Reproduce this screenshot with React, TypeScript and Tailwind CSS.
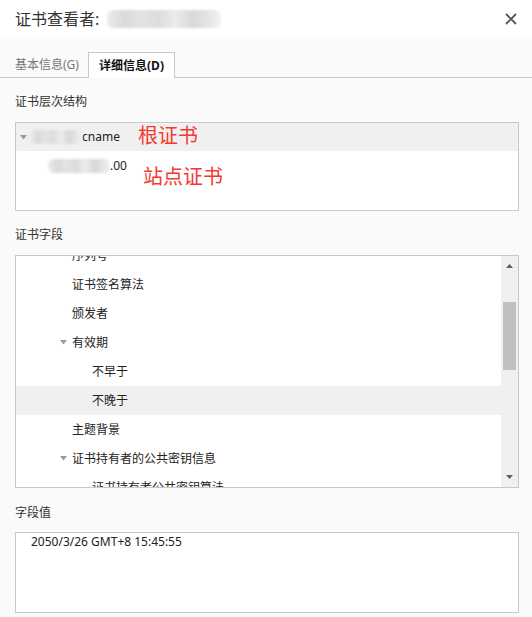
import React from "react";

type Field = {
  label: string;
  level: number;
  expanded?: boolean;
  selected?: boolean;
};

const fields: Field[] = [
  { label: "序列号", level: 1 },
  { label: "证书签名算法", level: 1 },
  { label: "颁发者", level: 1 },
  { label: "有效期", level: 1, expanded: true },
  { label: "不早于", level: 2 },
  { label: "不晚于", level: 2, selected: true },
  { label: "主题背景", level: 1 },
  { label: "证书持有者的公共密钥信息", level: 1, expanded: true },
  { label: "证书持有者公共密钥算法", level: 2 },
];

function Caret() {
  return (
    <svg width="7" height="5" viewBox="0 0 7 5" className="shrink-0">
      <path d="M0 0 L7 0 L3.5 4.5 Z" fill="#9a9a9a" />
    </svg>
  );
}

function Blur({ className }: { className: string }) {
  return (
    <div
      className={`blur-[1px] rounded-[6px] bg-[linear-gradient(90deg,#ececec_0%,#dadada_15%,#e4e4e4_30%,#dcdcdc_45%,#ececec_60%,#d8d8d8_75%,#e6e6e6_90%,#f2f2f2_100%)] ${className}`}
    />
  );
}

export default function App() {
  return (
    <div className="w-[532px] h-[617px] overflow-hidden bg-[#fafafa] text-[#222] font-['Noto_Sans','Noto_Sans_CJK_SC',sans-serif]">
      {/* title bar */}
      <div className="h-[37px] bg-white flex items-center pl-[15px] pr-[15px]">
        <span className="text-[16px] text-[#333] leading-none">证书查看者:</span>
        <Blur className="ml-[8px] w-[114px] h-[18px]" />
        <div className="flex-1" />
        <svg width="12" height="12" viewBox="0 0 12 12">
          <path d="M1 1 L11 11 M11 1 L1 11" stroke="#555" strokeWidth="1.8" />
        </svg>
      </div>

      {/* tabs */}
      <div className="h-[41px] flex items-end border-b border-[#c8c8c8] pl-[15px]">
        <div className="h-[25px] w-[73px] flex items-center text-[12px] text-[#777]">
          基本信息(G)
        </div>
        <div className="h-[26px] w-[87px] -mb-px bg-white border border-b-0 border-[#c8c8c8] flex items-center justify-center text-[12px] font-bold text-[#111]">
          详细信息(D)
        </div>
      </div>

      <div className="pl-[15px]">
        {/* hierarchy */}
        <div className="mt-[14px] h-[20px] leading-[20px] text-[12px] text-[#333]">证书层次结构</div>
        <div className="relative mt-[10px] w-[504px] h-[89px] bg-white border border-[#c8c8c8]">
          <div className="h-[28px] bg-[#f0f0f0] flex items-center pl-[4px]">
            <Caret />
            <Blur className="ml-[3px] w-[52px] h-[14px]" />
            <span className="text-[12px]">cname</span>
          </div>
          <div className="h-[29px] flex items-center pl-[32px]">
            <Blur className="w-[62px] h-[14px]" />
            <span className="text-[12px]">.00</span>
          </div>
          <span className="absolute left-[122px] top-[-2px] text-[20px] text-[#f23a2f] leading-[30px]">根证书</span>
          <span className="absolute left-[127px] top-[39px] text-[20px] text-[#f23a2f] leading-[30px]">站点证书</span>
        </div>

        {/* fields */}
        <div className="mt-[14px] h-[20px] leading-[20px] text-[12px] text-[#333]">证书字段</div>
        <div className="mt-[10px] w-[504px] h-[233px] bg-white border border-[#c8c8c8] flex overflow-hidden">
          <div className="flex-1 overflow-hidden">
            <div className="-mt-[15px]">
              {fields.map((f) => (
                <div
                  key={f.label}
                  className={`h-[29px] flex items-center text-[12px] ${f.selected ? "bg-[#f0f0f0]" : ""} ${
                    f.level === 1 ? "pl-[44px]" : "pl-[64px]"
                  }`}
                >
                  <div className="w-[12px] flex items-center">{f.expanded ? <Caret /> : null}</div>
                  {f.label}
                </div>
              ))}
            </div>
          </div>
          <div className="w-[17px] bg-[#f0f0f0] relative">
            <svg width="7" height="4" viewBox="0 0 7 4" className="absolute left-[5px] top-[8px]">
              <path d="M0 4 L7 4 L3.5 0 Z" fill="#606060" />
            </svg>
            <div className="absolute left-[2px] top-[46px] w-[13px] h-[68px] bg-[#c0c0c0]" />
            <svg width="7" height="4" viewBox="0 0 7 4" className="absolute left-[5px] bottom-[8px]">
              <path d="M0 0 L7 0 L3.5 4 Z" fill="#606060" />
            </svg>
          </div>
        </div>

        {/* value */}
        <div className="mt-[15px] h-[20px] leading-[20px] text-[12px] text-[#333]">字段值</div>
        <div className="mt-[9px] w-[504px] h-[81px] bg-white border border-[#c8c8c8] pl-[15px] text-[12px] leading-[18px]">
          2050/3/26 GMT+8 15:45:55
        </div>
      </div>
    </div>
  );
}
